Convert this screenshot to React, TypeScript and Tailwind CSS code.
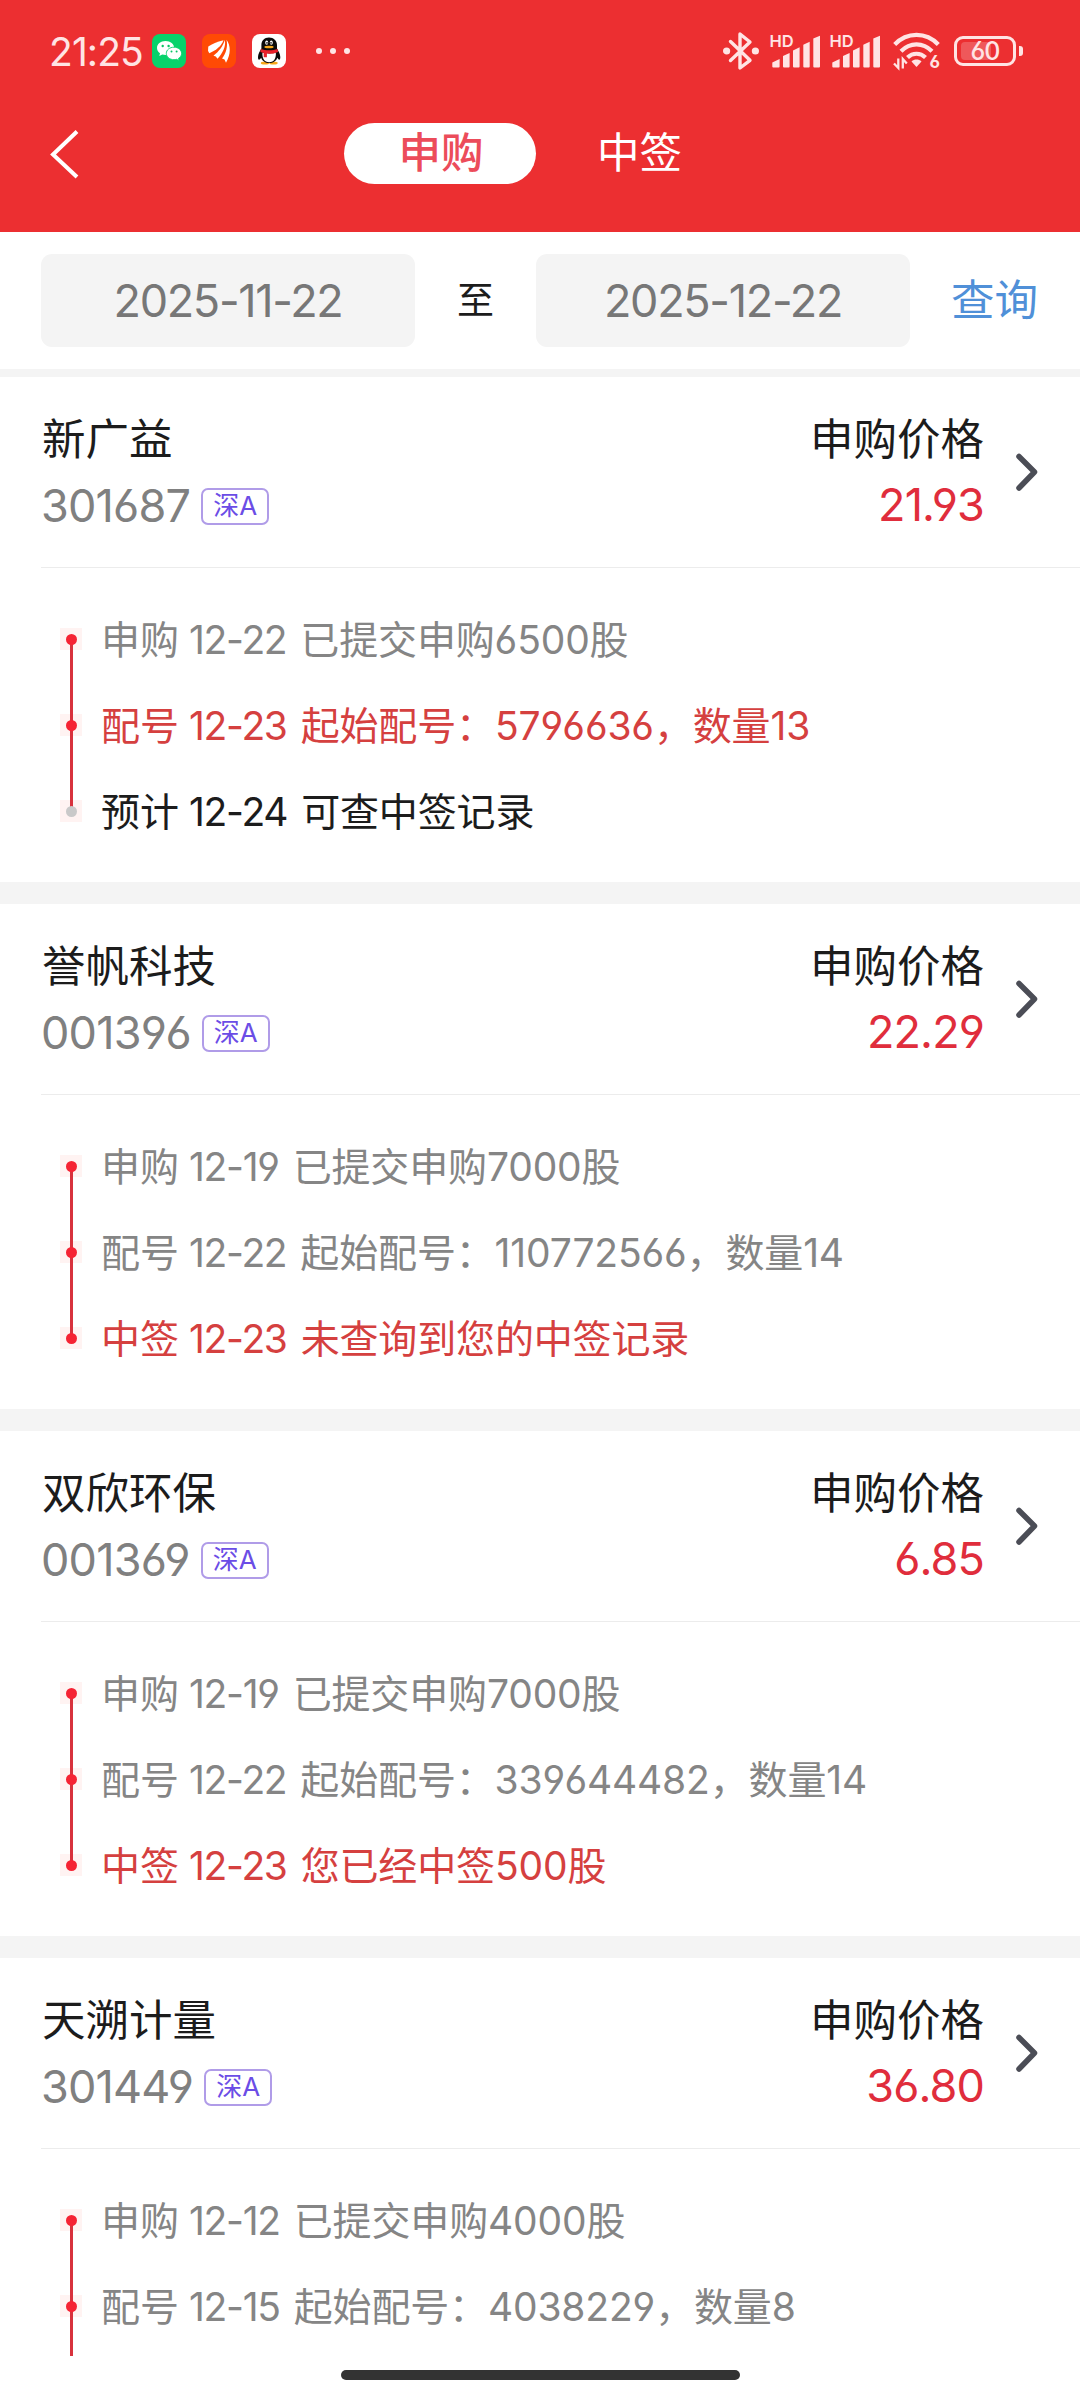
import { clsx } from "clsx";

type Tone = "muted" | "active" | "pending";

interface Step {
  label: string;
  date: string;
  text: string;
  tone: Tone;
}

interface Stock {
  name: string;
  code: string;
  price: string;
  steps: Step[];
}

const stocks: Stock[] = [
  {
    name: "新广益",
    code: "301687",
    price: "21.93",
    steps: [
      { label: "申购", date: "12-22", text: "已提交申购6500股", tone: "muted" },
      { label: "配号", date: "12-23", text: "起始配号：5796636，数量13", tone: "active" },
      { label: "预计", date: "12-24", text: "可查中签记录", tone: "pending" },
    ],
  },
  {
    name: "誉帆科技",
    code: "001396",
    price: "22.29",
    steps: [
      { label: "申购", date: "12-19", text: "已提交申购7000股", tone: "muted" },
      { label: "配号", date: "12-22", text: "起始配号：110772566，数量14", tone: "muted" },
      { label: "中签", date: "12-23", text: "未查询到您的中签记录", tone: "active" },
    ],
  },
  {
    name: "双欣环保",
    code: "001369",
    price: "6.85",
    steps: [
      { label: "申购", date: "12-19", text: "已提交申购7000股", tone: "muted" },
      { label: "配号", date: "12-22", text: "起始配号：339644482，数量14", tone: "muted" },
      { label: "中签", date: "12-23", text: "您已经中签500股", tone: "active" },
    ],
  },
  {
    name: "天溯计量",
    code: "301449",
    price: "36.80",
    steps: [
      { label: "申购", date: "12-12", text: "已提交申购4000股", tone: "muted" },
      { label: "配号", date: "12-15", text: "起始配号：4038229，数量8", tone: "muted" },
    ],
  },
];

function WechatIcon() {
  return (
    <svg width="34" height="34" viewBox="0 0 34 34">
      <rect width="34" height="34" rx="8" fill="#07d36b" />
      <path d="M13.500 7C8.500 7 5 10.200 5 14c0 2.200 1.200 4 3 5.300L7.300 22l3-1.600c1 .3 2 .5 3.200.5 5 0 8.700-3 8.700-6.900S18.500 7 13.500 7z" fill="#fff" />
      <path d="M22 13.200c-4.300 0-7.700 2.700-7.700 6.200s3.400 6.300 7.700 6.300c.9 0 1.800-.1 2.600-.4l2.500 1.400-.6-2.300c1.900-1.100 3.100-2.900 3.100-5 0-3.500-3.400-6.200-7.600-6.200z" fill="#fff" stroke="#07d36b" strokeWidth="0.900" />
      <circle cx="10.700" cy="12" r="1.200" fill="#07c563" />
      <circle cx="16.600" cy="12" r="1.200" fill="#07c563" />
      <circle cx="19.500" cy="17.600" r="1" fill="#07c563" />
      <circle cx="24.600" cy="17.600" r="1" fill="#07c563" />
    </svg>
  );
}

function BrokerIcon() {
  return (
    <svg width="34" height="34" viewBox="0 0 34 34">
      <rect width="34" height="34" rx="8" fill="#ff4a05" />
      <path d="M6.300 12.500C10 10 15 8 21.500 6.300 19.500 12 14 16.500 7.300 19.300L6 16.800z" fill="#fff" />
      <path d="M22.800 6c1.500 6-2.300 13.500-7.300 18.700l-1.700-2.200-2.300-.8C16.800 17.500 21 12.500 22.800 6z" fill="#fff" />
      <path d="M24.500 5.800c4.300 5.500 4.600 14.500-.5 22.900l-1.500-3.200-2.500-1C24.200 19.500 26 12 24.500 5.800z" fill="#fff" />
    </svg>
  );
}

function PenguinIcon() {
  return (
    <svg width="34" height="34" viewBox="0 0 34 34">
      <rect width="34" height="34" rx="8" fill="#fff" />
      <ellipse cx="13" cy="29" rx="4.200" ry="1.500" fill="#f7a81b" />
      <ellipse cx="21.500" cy="29" rx="4.200" ry="1.500" fill="#f7a81b" />
      <path d="M17 3.600c-4.700 0-7.600 3.400-7.600 7.400v3.500C8 16.800 6 20 6 23c0 1.800.4 2.700 1 2.700.6 0 1.400-.8 2.200-2 .9 3.200 4 5.300 8 5.300s7.200-2.100 8-5.300c.8 1.200 1.600 2 2.200 2 .5 0 .9-.9.9-2.700 0-3-2-6.200-3.300-8.500V11c0-4-3.300-7.400-8-7.400z" fill="#0a0a0a" />
      <path d="M10.500 18.500c2 1.200 11.300 1.200 13.300 0 .6 5.500-1.700 9.800-6.600 9.800s-7.300-4.300-6.700-9.800z" fill="#fff" />
      <path d="M8.800 15c4.500 1.800 12.200 1.800 16.700 0l.6 2.900c-3.700 1.600-8 2-11.200 1.700v3.600h-3.200v-4.200L8.300 18z" fill="#e8202a" />
      <ellipse cx="14.700" cy="8.700" rx="1.500" ry="2.100" fill="#fff" />
      <ellipse cx="19.300" cy="8.700" rx="1.500" ry="2.100" fill="#fff" />
      <circle cx="15" cy="8.900" r="0.800" fill="#0a0a0a" />
      <circle cx="19" cy="8.900" r="0.800" fill="#0a0a0a" />
      <ellipse cx="17" cy="13" rx="4.700" ry="1.300" fill="#f7a81b" />
    </svg>
  );
}

function BluetoothIcon() {
  return (
    <svg width="36" height="40" viewBox="0 0 36 40" fill="none" stroke="#ffe4e4" strokeWidth="3.400" strokeLinecap="round" strokeLinejoin="round">
      <path d="M7.500 10.500L27 29.300 17 37V3l10 8L7.500 29.500" />
      <circle cx="3.600" cy="20" r="1.900" fill="#ffe4e4" />
      <circle cx="32.400" cy="20" r="1.900" fill="#ffe4e4" />
    </svg>
  );
}

function SignalIcon() {
  return (
    <svg width="50" height="34" viewBox="0 0 50 34" fill="#ffe4e4" className="overflow-visible">
      <text x="-0.500" y="12.500" fontSize="16.500" fontWeight="600" className="font-['Inter']">HD</text>
      <path d="M2.300 28.500L9.600 25v7.500a1 1 0 0 1-1 1H3.300a1 1 0 0 1-1-1z" />
      <path d="M13 22l6.600-3v13.500a1 1 0 0 1-1 1H14a1 1 0 0 1-1-1z" />
      <path d="M23 16.500l6.600-3.200v19.200a1 1 0 0 1-1 1H24a1 1 0 0 1-1-1z" />
      <path d="M33.300 10.700l6.400-3v24.800a1 1 0 0 1-1 1h-4.400a1 1 0 0 1-1-1z" />
      <path d="M43.300 4.600L50 1.700v30.800a1 1 0 0 1-1 1h-4.700a1 1 0 0 1-1-1z" />
    </svg>
  );
}

function WifiIcon() {
  return (
    <svg width="47" height="36" viewBox="0 0 47 36" fill="none" stroke="#ffe4e4" strokeWidth="4.200" className="overflow-visible">
      <path d="M1.700 11.500C14-1.300 33-1.300 45.300 11.500" />
      <path d="M8 18.300c9-9.200 22-9.200 31 0" />
      <path d="M14.500 24.500c5.200-5 12.800-5 18 0" />
      <path d="M18.500 28.500c2.800-2.600 7.200-2.600 10 0l-5 5.500z" fill="#ffe4e4" stroke="none" />
      <path d="M5.300 25.500v9.500L1 30.500M9.800 35.500V26l4 4.500" strokeWidth="2.300" />
      <text x="36.500" y="35" fontSize="17" fontWeight="700" fill="#ffe4e4" stroke="none" className="font-['Inter']">6</text>
    </svg>
  );
}

function Battery({ level }: { level: number }) {
  return (
    <div className="flex items-center gap-[3px]">
      <div className="relative flex h-[30px] w-[62px] items-center justify-center rounded-[9px] border-[3px] border-[#ffe4e4]">
        <div className="absolute top-[3px] left-[4px] h-[18px] rounded-[4px] bg-white/20" style={{ width: `${level * 0.5}px` }} />
        <span className="relative text-[25px] leading-none font-medium tracking-[-0.9px]">{level}</span>
      </div>
      <div className="h-[10px] w-1 rounded-r-[3px] bg-[#ffe4e4]" />
    </div>
  );
}

function StatusBar() {
  return (
    <div className="flex h-[102px] items-center pr-[57px] pl-[49px] text-[#ffe4e4]">
      <span className="w-[103px] text-[39px] leading-none font-normal tracking-[-0.9px]">21:25</span>
      <div className="flex items-center gap-4">
        <WechatIcon />
        <BrokerIcon />
        <PenguinIcon />
      </div>
      <div className="ml-[30px] flex gap-2">
        <i className="size-[6px] rounded-full bg-[#ffe4e4]" />
        <i className="size-[6px] rounded-full bg-[#ffe4e4]" />
        <i className="size-[6px] rounded-full bg-[#ffe4e4]" />
      </div>
      <div className="ml-auto flex items-center">
        <BluetoothIcon />
        <div className="ml-[11px] flex gap-[10px]">
          <SignalIcon />
          <SignalIcon />
        </div>
        <div className="mr-[14px] ml-[13px]">
          <WifiIcon />
        </div>
        <Battery level={60} />
      </div>
    </div>
  );
}

function NavBar() {
  return (
    <div className="flex h-[103px] items-center pl-[50px] text-[42.500px] leading-none text-white">
      <svg width="30" height="50" viewBox="0 0 30 50" fill="none" stroke="#fff" strokeWidth="4">
        <path d="M27 2.500L3 25.500 27 48" />
      </svg>
      <button className="ml-[264px] flex h-[61px] w-48 items-center justify-center rounded-full bg-white pl-[2px] font-medium text-[#ec4c5a]">
        申购
      </button>
      <button className="ml-[61px] font-normal">中签</button>
    </div>
  );
}

function DateFilter() {
  return (
    <div className="flex h-[145px] shrink-0 items-center border-b-8 border-[#f4f4f4] bg-white px-[41px] text-[#777]">
      <div className="flex h-[93px] w-[374px] items-center justify-center rounded-[11px] bg-[#f4f4f4] text-[45px] tracking-[-1.3px]">
        2025-11-22
      </div>
      <span className="w-[121px] text-center text-[37px] text-[#1c1c1c]">至</span>
      <div className="flex h-[93px] w-[374px] items-center justify-center rounded-[11px] bg-[#f4f4f4] text-[45px] tracking-[-1.3px]">
        2025-12-22
      </div>
      <button className="mr-[1px] ml-auto text-[43.500px] font-normal text-[#5090d8]">查询</button>
    </div>
  );
}

function Timeline({ steps }: { steps: Step[] }) {
  return (
    <div className="relative flex h-[315px] flex-col pt-[28px] pl-[60px]">
      <i className="absolute top-[72px] left-[70px] h-[172px] w-[3px] bg-[#d8323d]" />
      {steps.map((step) => (
        <div key={step.label} className="flex h-[86px] items-center">
          <span className="flex size-[22px] items-center justify-center bg-[#fff3f2]">
            <i
              className={clsx(
                "relative size-[11px] rounded-full",
                step.tone === "pending" ? "bg-[#c9c9c9]" : "bg-[#f52434]"
              )}
            />
          </span>
          <p
            className={clsx(
              "ml-[19px] flex text-[39px] leading-none whitespace-nowrap",
              step.tone === "muted" && "text-[#858585]",
              step.tone === "active" && "text-[#d5403f]",
              step.tone === "pending" && "text-[#1c1c1c]"
            )}
          >
            <span>{step.label}</span>
            <span className="mr-[14px] ml-[10px] tracking-[-1.3px]">{step.date}</span>
            <span className="tracking-[-0.15px]">{step.text}</span>
          </p>
        </div>
      ))}
    </div>
  );
}

function StockCard({ stock }: { stock: Stock }) {
  return (
    <section className="h-[527px] shrink-0 border-b-[22px] border-[#f4f4f4] bg-white">
      <div className="ml-[41px] flex h-[191px] items-center border-b border-[#ececec] pr-[41px]">
        <div>
          <h2 className="ml-px text-[43.500px] leading-[66px] text-[#1c1c1c]">{stock.name}</h2>
          <div className="flex h-[66px] items-center">
            <span className="text-[45px] leading-none tracking-[-0.8px] text-[#808080]">{stock.code}</span>
            <span className="mt-[2px] ml-[11px] flex h-[37px] items-center rounded-[7px] border-2 border-[#b09ce8] px-[10px] text-[26px] leading-none font-normal text-[#6b4de6]">
              深A
            </span>
          </div>
        </div>
        <div className="mr-[31px] ml-auto text-right">
          <p className="text-[43.500px] leading-[66px] text-[#1c1c1c]">申购价格</p>
          <p className="text-[45px] leading-[66px] tracking-[-0.9px] text-[#e02d3c]">{stock.price}</p>
        </div>
        <svg width="24" height="40" viewBox="0 0 24 40" fill="none" stroke="#4b4d56" strokeWidth="5.500" strokeLinecap="round" strokeLinejoin="round">
          <path d="M4 4.500L19.500 20 4 36" />
        </svg>
      </div>
      <Timeline steps={stock.steps} />
    </section>
  );
}

export default function App() {
  return (
    <div className="flex h-[2400px] w-[1080px] flex-col overflow-hidden bg-white font-['Inter','Noto_Sans_CJK_SC',sans-serif] font-[390] [font-feature-settings:'cv03','cv04']">
      <header className="h-[232px] shrink-0 bg-[#ec2f31]">
        <StatusBar />
        <NavBar />
      </header>
      <main className="flex h-[2124px] shrink-0 flex-col overflow-hidden">
        <DateFilter />
        <div className="flex flex-col">
          {stocks.map((stock) => (
            <StockCard key={stock.code} stock={stock} />
          ))}
        </div>
      </main>
      <div className="flex h-11 items-center justify-center pb-1.5">
        <div className="h-[10px] w-[399px] rounded-full bg-[#333]" />
      </div>
    </div>
  );
}
